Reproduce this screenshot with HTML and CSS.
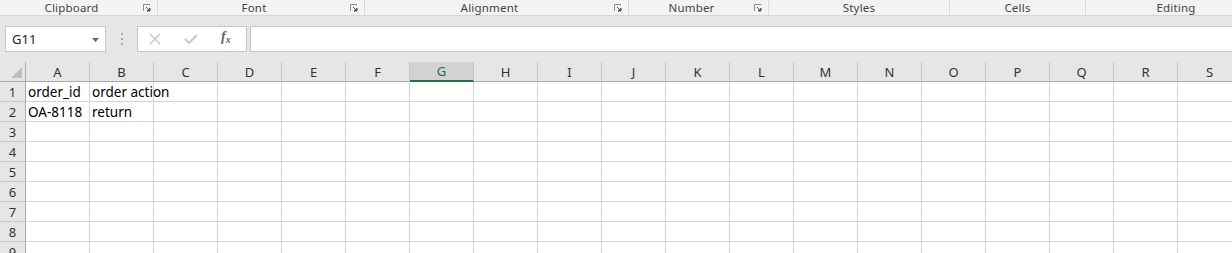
FILE: index.html
```html
<!DOCTYPE html>
<html lang="en">
<head>
<meta charset="UTF-8">
<title>Book1 - Excel</title>
<link rel="stylesheet" href="styles.css">
</head>
<body>

<div class="ribbon-groups">
    <div class="group g-clipboard"><span class="group-label">Clipboard</span><span class="launcher"><svg width="8" height="8" viewBox="0 0 8 8"><path d="M0.5 7V0.5H7" fill="none" stroke="#8a8a8a"/><path d="M3 3L6.5 6.5M7 4V7H4Z" fill="#555" stroke="#555" stroke-width="1"/></svg></span></div>
    <div class="group g-font"><span class="group-label">Font</span><span class="launcher"><svg width="8" height="8" viewBox="0 0 8 8"><path d="M0.5 7V0.5H7" fill="none" stroke="#8a8a8a"/><path d="M3 3L6.5 6.5M7 4V7H4Z" fill="#555" stroke="#555" stroke-width="1"/></svg></span></div>
    <div class="group g-alignment"><span class="group-label">Alignment</span><span class="launcher"><svg width="8" height="8" viewBox="0 0 8 8"><path d="M0.5 7V0.5H7" fill="none" stroke="#8a8a8a"/><path d="M3 3L6.5 6.5M7 4V7H4Z" fill="#555" stroke="#555" stroke-width="1"/></svg></span></div>
    <div class="group g-number"><span class="group-label">Number</span><span class="launcher"><svg width="8" height="8" viewBox="0 0 8 8"><path d="M0.5 7V0.5H7" fill="none" stroke="#8a8a8a"/><path d="M3 3L6.5 6.5M7 4V7H4Z" fill="#555" stroke="#555" stroke-width="1"/></svg></span></div>
    <div class="group g-styles"><span class="group-label">Styles</span></div>
    <div class="group g-cells"><span class="group-label">Cells</span></div>
    <div class="group g-editing"><span class="group-label">Editing</span></div>
</div>

<div class="formula-bar">
    <div class="name-box">
        <span>G11</span>
        <svg class="name-arrow" width="7" height="4" viewBox="0 0 7 4"><path d="M0 0H7L3.5 4Z" fill="#6a6a6a"/></svg>
    </div>
    <div class="bar-grip">
        <svg width="3" height="12" viewBox="0 0 3 12"><rect x="0" y="0" width="2" height="2" fill="#a8a8a8"/><rect x="0" y="5" width="2" height="2" fill="#a8a8a8"/><rect x="0" y="10" width="2" height="2" fill="#a8a8a8"/></svg>
    </div>
    <div class="fx-box">
        <svg class="fx-btn" width="12" height="12" viewBox="0 0 12 12"><path d="M1 1L11 11M11 1L1 11" stroke="#c4c4c4" stroke-width="1.4"/></svg>
        <svg class="fx-btn" width="14" height="12" viewBox="0 0 14 12"><path d="M1 6L5 10L13 2" fill="none" stroke="#c4c4c4" stroke-width="1.8"/></svg>
        <span class="fx-label">f<sub>x</sub></span>
    </div>
    <div class="formula-input"></div>
</div>

<div class="sheet" id="sheet"></div>

<script>
    const cols = 'ABCDEFGHIJKLMNOPQRS'.split('');
    const data = {
        1: ['order_id', 'order action'],
        2: ['OA-8118', 'return']
    };
    const sheet = document.getElementById('sheet');

    function cell(cls, text) {
        const d = document.createElement('div');
        d.className = cls;
        if (text) d.textContent = text;
        sheet.appendChild(d);
    }

    cell('corner', '');
    cols.forEach(c => cell(c === 'G' ? 'col-head selected' : 'col-head', c));

    for (let r = 1; r <= 9; r++) {
        cell('row-head', String(r));
        const values = data[r] || [];
        cols.forEach((c, i) => cell('cell', values[i] || ''));
    }
</script>

</body>
</html>
```

FILE: styles.css
```css
body {
    margin: 0;
    width: 1232px;
    height: 253px;
    overflow: hidden;
    background: #fff;
    font-family: "Noto Sans", "Open Sans", sans-serif;
}

/* ribbon group captions */
.ribbon-groups {
    display: flex;
    height: 15px;
    background: #f3f3f3;
    border-bottom: 1px solid #d6d6d6;
    overflow: hidden;
}
.group {
    display: flex;
    align-items: center;
    flex: 0 0 auto;
    height: 15px;
    border-right: 1px solid #dadada;
    box-sizing: border-box;
}
.group-label {
    flex: 1;
    text-align: center;
    font-size: 11.5px;
    color: #444;
    line-height: 14px;
    letter-spacing: 0.2px;
}
.launcher {
    width: 14px;
    display: flex;
    align-items: center;
    padding-top: 1px;
}
.g-clipboard { width: 158px; }
.g-font { width: 207px; }
.g-alignment { width: 264px; }
.g-number { width: 140px; }
.g-styles { width: 181px; }
.g-cells { width: 136px; }
.g-editing { width: 180px; border-right: none; }

/* formula bar */
.formula-bar {
    display: flex;
    align-items: center;
    height: 46px;
    background: #e6e6e6;
    padding: 0 0 0 5px;
}
.name-box {
    display: flex;
    align-items: center;
    justify-content: space-between;
    width: 101px;
    height: 26px;
    box-sizing: border-box;
    background: #fff;
    border: 1px solid #c6c6c6;
    padding: 0 6px 0 6px;
    font-size: 13px;
    color: #222;
}
.name-arrow {
    margin-top: 1px;
}
.bar-grip {
    display: flex;
    align-items: center;
    width: 31px;
    padding-left: 15px;
    box-sizing: border-box;
}
.fx-box {
    display: flex;
    align-items: center;
    width: 110px;
    height: 26px;
    box-sizing: border-box;
    background: #fff;
    border: 1px solid #c6c6c6;
    padding-left: 11px;
}
.fx-btn {
    margin-right: 23px;
}
.fx-label {
    font-family: "Liberation Serif", serif;
    font-style: italic;
    font-weight: bold;
    font-size: 14px;
    color: #666;
    line-height: 1;
    margin-top: -3px;
}
.fx-label sub {
    font-size: 10px;
    vertical-align: -2px;
}
.formula-input {
    flex: 1;
    height: 26px;
    margin-left: 3px;
    box-sizing: border-box;
    background: #fff;
    border: 1px solid #c6c6c6;
    border-right: none;
}

/* worksheet grid */
.sheet {
    display: grid;
    grid-template-columns: 26px repeat(19, 64px);
    grid-auto-rows: 20px;
}
.corner {
    position: relative;
    background: #e6e6e6;
    border-right: 1px solid #ababab;
    border-bottom: 1px solid #ababab;
}
.corner::after {
    content: "";
    position: absolute;
    right: 3px;
    bottom: 3px;
    border-style: solid;
    border-width: 0 0 11px 11px;
    border-color: transparent transparent #bdbdbd transparent;
}
.col-head {
    background: #e6e6e6;
    border-right: 1px solid #c8c8c8;
    border-bottom: 1px solid #ababab;
    text-align: center;
    font-size: 13px;
    line-height: 20px;
    color: #333;
}
.col-head.selected {
    background: #d2d2d2;
    color: #217346;
    border-bottom: 2px solid #217346;
    line-height: 19px;
}
.row-head {
    background: #e6e6e6;
    border-right: 1px solid #ababab;
    border-bottom: 1px solid #c8c8c8;
    text-align: center;
    font-size: 13px;
    line-height: 21px;
    color: #333;
}
.cell {
    border-right: 1px solid #d4d4d4;
    border-bottom: 1px solid #d4d4d4;
    padding-left: 2px;
    font-size: 13.5px;
    line-height: 21px;
    color: #000;
    white-space: nowrap;
}
```
